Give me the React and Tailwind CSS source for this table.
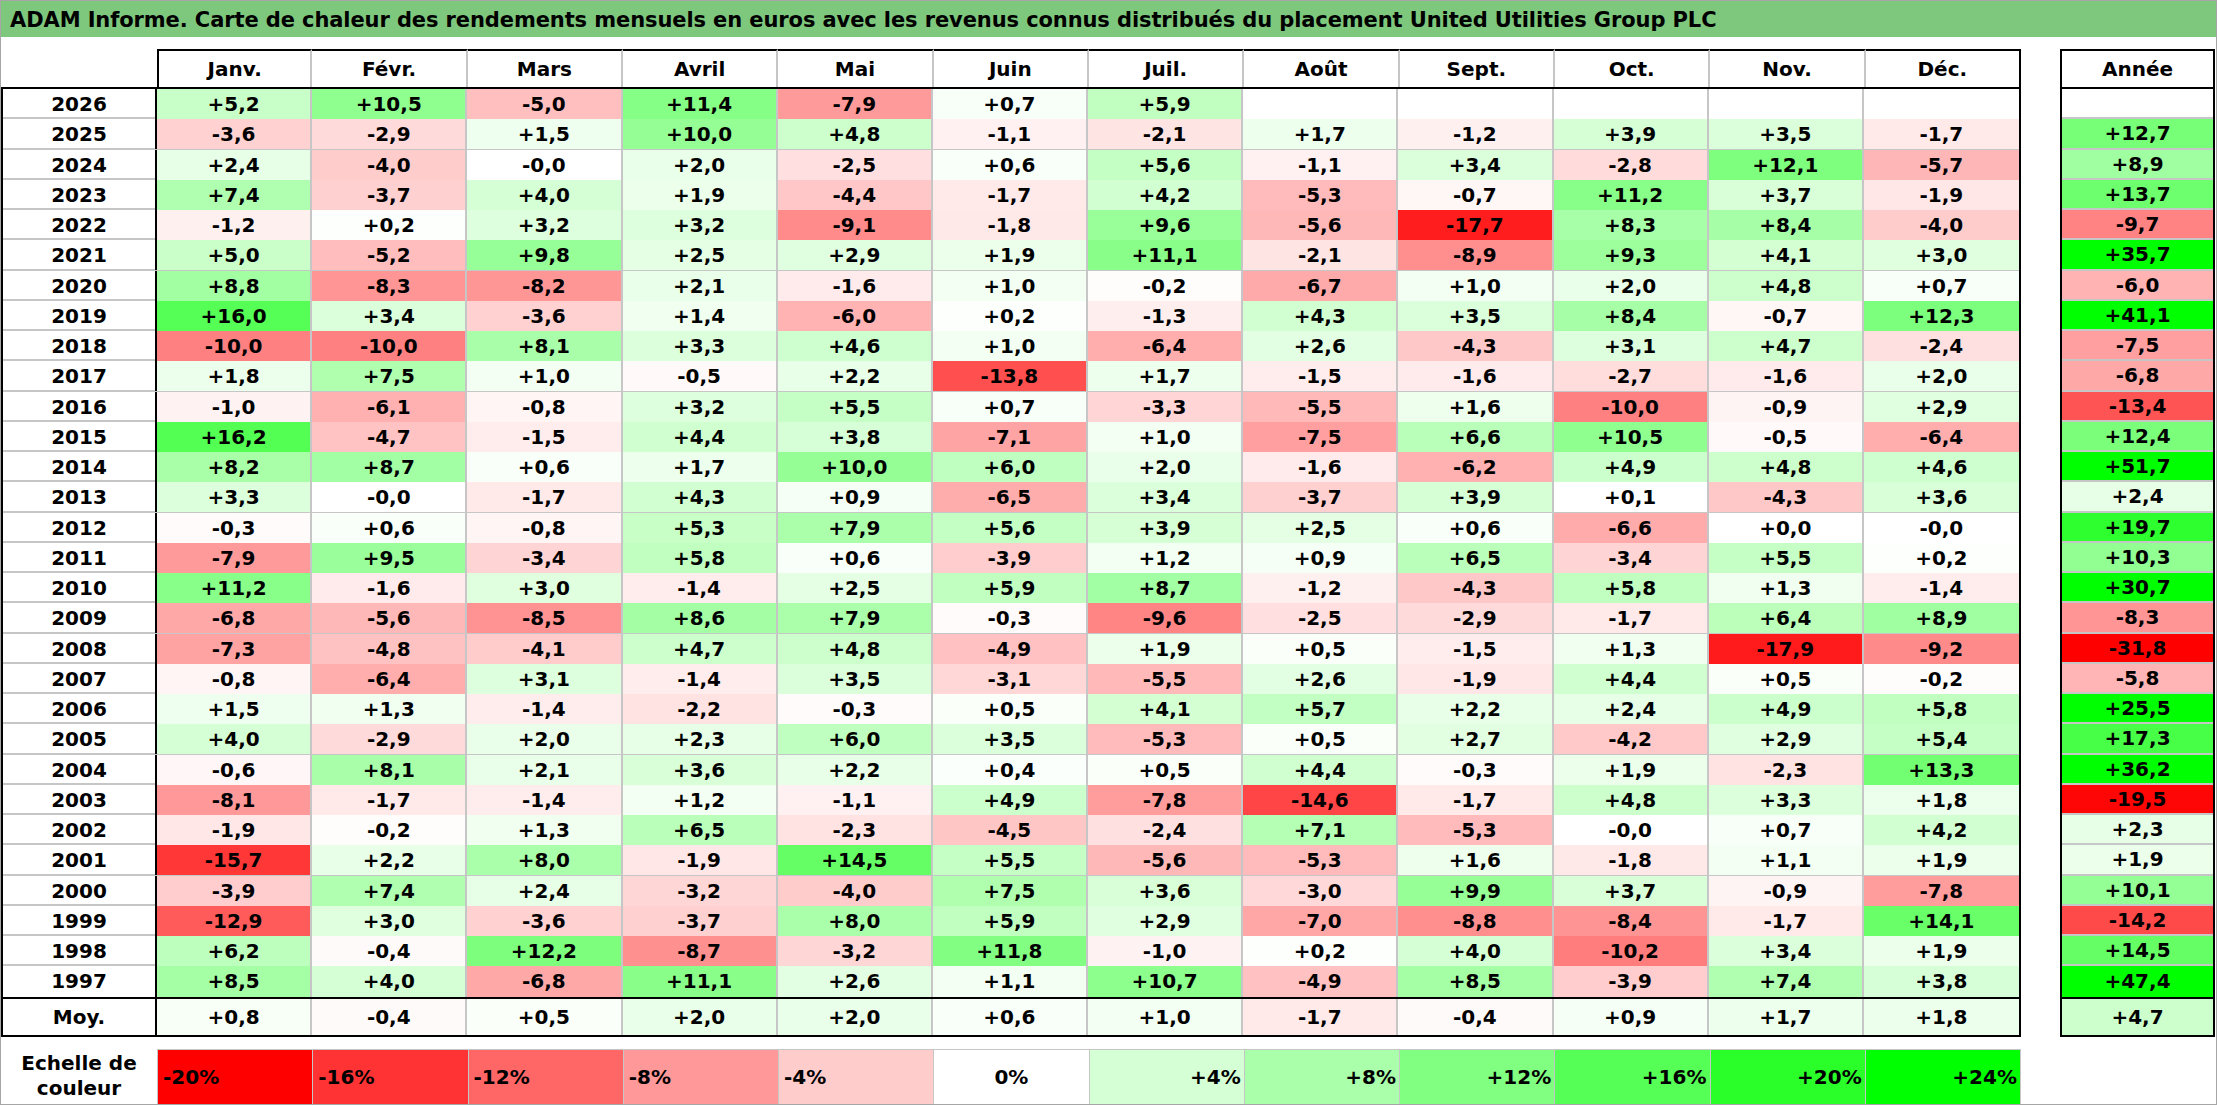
import React from 'react';

const MONTHS = ['Janv.', 'Févr.', 'Mars', 'Avril', 'Mai', 'Juin', 'Juil.', 'Août', 'Sept.', 'Oct.', 'Nov.', 'Déc.'];

// year, 12 months, annual
const ROWS = [
  ['2026', '+5,2 +10,5 -5,0 +11,4 -7,9 +0,7 +5,9 . . . . .', ''],
  ['2025', '-3,6 -2,9 +1,5 +10,0 +4,8 -1,1 -2,1 +1,7 -1,2 +3,9 +3,5 -1,7', '+12,7'],
  ['2024', '+2,4 -4,0 -0,0 +2,0 -2,5 +0,6 +5,6 -1,1 +3,4 -2,8 +12,1 -5,7', '+8,9'],
  ['2023', '+7,4 -3,7 +4,0 +1,9 -4,4 -1,7 +4,2 -5,3 -0,7 +11,2 +3,7 -1,9', '+13,7'],
  ['2022', '-1,2 +0,2 +3,2 +3,2 -9,1 -1,8 +9,6 -5,6 -17,7 +8,3 +8,4 -4,0', '-9,7'],
  ['2021', '+5,0 -5,2 +9,8 +2,5 +2,9 +1,9 +11,1 -2,1 -8,9 +9,3 +4,1 +3,0', '+35,7'],
  ['2020', '+8,8 -8,3 -8,2 +2,1 -1,6 +1,0 -0,2 -6,7 +1,0 +2,0 +4,8 +0,7', '-6,0'],
  ['2019', '+16,0 +3,4 -3,6 +1,4 -6,0 +0,2 -1,3 +4,3 +3,5 +8,4 -0,7 +12,3', '+41,1'],
  ['2018', '-10,0 -10,0 +8,1 +3,3 +4,6 +1,0 -6,4 +2,6 -4,3 +3,1 +4,7 -2,4', '-7,5'],
  ['2017', '+1,8 +7,5 +1,0 -0,5 +2,2 -13,8 +1,7 -1,5 -1,6 -2,7 -1,6 +2,0', '-6,8'],
  ['2016', '-1,0 -6,1 -0,8 +3,2 +5,5 +0,7 -3,3 -5,5 +1,6 -10,0 -0,9 +2,9', '-13,4'],
  ['2015', '+16,2 -4,7 -1,5 +4,4 +3,8 -7,1 +1,0 -7,5 +6,6 +10,5 -0,5 -6,4', '+12,4'],
  ['2014', '+8,2 +8,7 +0,6 +1,7 +10,0 +6,0 +2,0 -1,6 -6,2 +4,9 +4,8 +4,6', '+51,7'],
  ['2013', '+3,3 -0,0 -1,7 +4,3 +0,9 -6,5 +3,4 -3,7 +3,9 +0,1 -4,3 +3,6', '+2,4'],
  ['2012', '-0,3 +0,6 -0,8 +5,3 +7,9 +5,6 +3,9 +2,5 +0,6 -6,6 +0,0 -0,0', '+19,7'],
  ['2011', '-7,9 +9,5 -3,4 +5,8 +0,6 -3,9 +1,2 +0,9 +6,5 -3,4 +5,5 +0,2', '+10,3'],
  ['2010', '+11,2 -1,6 +3,0 -1,4 +2,5 +5,9 +8,7 -1,2 -4,3 +5,8 +1,3 -1,4', '+30,7'],
  ['2009', '-6,8 -5,6 -8,5 +8,6 +7,9 -0,3 -9,6 -2,5 -2,9 -1,7 +6,4 +8,9', '-8,3'],
  ['2008', '-7,3 -4,8 -4,1 +4,7 +4,8 -4,9 +1,9 +0,5 -1,5 +1,3 -17,9 -9,2', '-31,8'],
  ['2007', '-0,8 -6,4 +3,1 -1,4 +3,5 -3,1 -5,5 +2,6 -1,9 +4,4 +0,5 -0,2', '-5,8'],
  ['2006', '+1,5 +1,3 -1,4 -2,2 -0,3 +0,5 +4,1 +5,7 +2,2 +2,4 +4,9 +5,8', '+25,5'],
  ['2005', '+4,0 -2,9 +2,0 +2,3 +6,0 +3,5 -5,3 +0,5 +2,7 -4,2 +2,9 +5,4', '+17,3'],
  ['2004', '-0,6 +8,1 +2,1 +3,6 +2,2 +0,4 +0,5 +4,4 -0,3 +1,9 -2,3 +13,3', '+36,2'],
  ['2003', '-8,1 -1,7 -1,4 +1,2 -1,1 +4,9 -7,8 -14,6 -1,7 +4,8 +3,3 +1,8', '-19,5'],
  ['2002', '-1,9 -0,2 +1,3 +6,5 -2,3 -4,5 -2,4 +7,1 -5,3 -0,0 +0,7 +4,2', '+2,3'],
  ['2001', '-15,7 +2,2 +8,0 -1,9 +14,5 +5,5 -5,6 -5,3 +1,6 -1,8 +1,1 +1,9', '+1,9'],
  ['2000', '-3,9 +7,4 +2,4 -3,2 -4,0 +7,5 +3,6 -3,0 +9,9 +3,7 -0,9 -7,8', '+10,1'],
  ['1999', '-12,9 +3,0 -3,6 -3,7 +8,0 +5,9 +2,9 -7,0 -8,8 -8,4 -1,7 +14,1', '-14,2'],
  ['1998', '+6,2 -0,4 +12,2 -8,7 -3,2 +11,8 -1,0 +0,2 +4,0 -10,2 +3,4 +1,9', '+14,5'],
  ['1997', '+8,5 +4,0 -6,8 +11,1 +2,6 +1,1 +10,7 -4,9 +8,5 -3,9 +7,4 +3,8', '+47,4'],
];

const AVG = '+0,8 -0,4 +0,5 +2,0 +2,0 +0,6 +1,0 -1,7 -0,4 +0,9 +1,7 +1,8'.split(' ');
const AVG_YEAR = '+4,7';

const SCALE = [-20, -16, -12, -8, -4, 0, 4, 8, 12, 16, 20, 24];

// red below zero (full at -20), green above (full at +24)
function heat(txt) {
  if (txt === '' || txt === '.' || txt == null) return '#ffffff';
  const v = typeof txt === 'number' ? txt : parseFloat(txt.replace(',', '.'));
  if (v < 0) {
    const c = Math.round(255 * Math.max(0, 1 + v / 20));
    return `rgb(255,${c},${c})`;
  }
  const c = Math.round(255 * Math.max(0, 1 - v / 24));
  return `rgb(${c},255,${c})`;
}

function Cell({ value, last }) {
  const empty = value === '.' || value === '';
  return (
    <div
      className={`flex items-center justify-center ${last ? '' : 'border-r-2 border-[#c6c6c6]'}`}
      style={{ backgroundColor: heat(value) }}
    >
      {empty ? '' : value}
    </div>
  );
}

export default function App() {
  return (
    <div className="w-[2217px] h-[1105px] bg-white border border-[#a6a6a6] flex flex-col font-['DejaVu_Sans',sans-serif] font-bold text-[20px] text-black overflow-hidden">
      {/* Title */}
      <div className="h-[36px] shrink-0 bg-[#7dc87d] flex items-center pl-[9px] pt-[3px] text-[21px] tracking-[-0.1px]">
        ADAM Informe. Carte de chaleur des rendements mensuels en euros avec les revenus connus distribués du placement United Utilities Group PLC
      </div>

      <div className="flex mt-[12px]">
        {/* Monthly table */}
        <div className="w-[2020px] shrink-0">
          <div className="grid grid-cols-[156px_repeat(12,1fr)] h-[38px]">
            <div />
            {MONTHS.map((m, i) => (
              <div
                key={m}
                className={`flex items-center justify-center border-t-2 border-black ${i === 0 ? 'border-l-2' : ''} ${i === 11 ? 'border-r-2' : 'border-r-2 border-r-[#c6c6c6]'}`}
              >
                {m}
              </div>
            ))}
          </div>

          <div className="border-2 border-black">
            {ROWS.map(([year, months]) => {
              const vals = months.split(' ');
              return (
                <div key={year} className="grid grid-cols-[154px_repeat(12,1fr)] h-[30.25px] border-b-2 border-[#c6c6c6] last:border-b-0">
                  <div className="flex items-center justify-center border-r-2 border-black">{year}</div>
                  {vals.map((v, i) => (
                    <Cell key={i} value={v} last={i === 11} />
                  ))}
                </div>
              );
            })}
          </div>

          <div className="grid grid-cols-[154px_repeat(12,1fr)] h-[38px] border-2 border-t-0 border-black">
            <div className="flex items-center justify-center border-r-2 border-black">Moy.</div>
            {AVG.map((v, i) => (
              <Cell key={i} value={v} last={i === 11} />
            ))}
          </div>
        </div>

        <div className="w-[39px] shrink-0" />

        {/* Annual column */}
        <div className="w-[155px] shrink-0">
          <div className="h-[38px] flex items-center justify-center border-2 border-b-0 border-black">Année</div>
          <div className="border-2 border-black">
            {ROWS.map(([year, , total]) => (
              <div
                key={year}
                className="h-[30.25px] flex items-center justify-center border-b-2 border-[#c6c6c6] last:border-b-0"
                style={{ backgroundColor: heat(total) }}
              >
                {total}
              </div>
            ))}
          </div>
          <div
            className="h-[38px] flex items-center justify-center border-2 border-t-0 border-black"
            style={{ backgroundColor: heat(AVG_YEAR) }}
          >
            {AVG_YEAR}
          </div>
        </div>
      </div>

      {/* Colour scale */}
      <div className="flex mt-[12px] flex-1">
        <div className="w-[156px] shrink-0 flex flex-col items-center justify-center leading-[25px]">
          <span>Echelle de</span>
          <span>couleur</span>
        </div>
        <div className="w-[1864px] shrink-0 grid grid-cols-12 border-t border-l border-[#c6c6c6]">
          {SCALE.map((s) => (
            <div
              key={s}
              className={`flex items-center border-r border-[#c6c6c6] ${s < 0 ? 'justify-start pl-[5px]' : s === 0 ? 'justify-center' : 'justify-end pr-[3px]'}`}
              style={{ backgroundColor: heat(s) }}
            >
              {s > 0 ? `+${s}%` : `${s}%`}
            </div>
          ))}
        </div>
      </div>
    </div>
  );
}
